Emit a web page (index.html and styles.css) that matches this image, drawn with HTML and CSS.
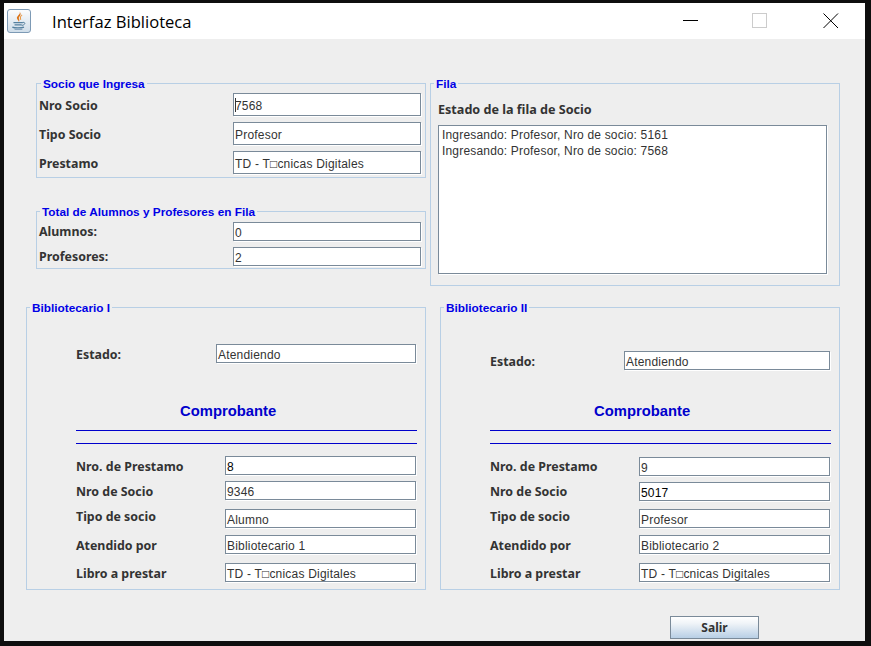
FILE: index.html
```html
<!DOCTYPE html>
<html lang="es">
<head>
    <meta charset="UTF-8">
    <meta name="viewport" content="width=device-width, initial-scale=1.0">
    <title>Interfaz Biblioteca</title>
    <link rel="stylesheet" href="styles.css">
</head>
<body>
    <div class="ventana">
        <div class="titulo">
            <span class="icono-java">
                <svg width="20" height="20" viewBox="0 0 18 18">
                    <path d="M9.500 0.500C11 3 6.500 4.500 7.200 6.800C7.500 7.800 8.500 8.300 9 9.800C9.800 8 8.800 7.300 8.800 6.300C8.800 5 12 3.500 9.500 0.500Z" fill="#dd7418"/>
                    <path d="M11.800 3.500C10 4.800 9.800 6 10.600 7.800" fill="none" stroke="#e79a4a" stroke-width="1"/>
                    <path d="M4 10.500H12.500M5 12.500H11.500" stroke="#55809f" stroke-width="1.200" fill="none"/>
                    <path d="M12.500 10.200C15 9.800 15 12.500 11.500 13" stroke="#55809f" stroke-width="0.900" fill="none"/>
                    <path d="M3 14.500C5 15.500 11 15.500 13.500 14.500" stroke="#55809f" stroke-width="1.100" fill="none"/>
                    <path d="M5 16.600H12" stroke="#8aa6bf" stroke-width="1" fill="none"/>
                </svg>
            </span>
            <span class="titulo-texto">Interfaz Biblioteca</span>
            <span class="controles">
                <svg width="16" height="16" viewBox="0 0 16 16"><path d="M0 7.500H15" stroke="#000" fill="none"/></svg>
                <svg width="16" height="16" viewBox="0 0 16 16"><rect x="0.500" y="0.500" width="14" height="14" fill="none" stroke="#ccc"/></svg>
                <svg class="cerrar" width="16" height="16" viewBox="0 0 16 16"><path d="M0.500 0.500L15 15M15 0.500L0.500 15" stroke="#000" fill="none"/></svg>
            </span>
        </div>

        <div class="contenido">
            <div class="superior">
                <div class="col-izq">
                    <fieldset class="panel panel-socio">
                        <legend>Socio que Ingresa</legend>
                        <div class="fila-dato"><label>Nro Socio</label><span class="campo"><i class="cursor"></i>7568</span></div>
                        <div class="fila-dato"><label>Tipo Socio</label><span class="campo">Profesor</span></div>
                        <div class="fila-dato"><label>Prestamo</label><span class="campo">TD - T□cnicas Digitales</span></div>
                    </fieldset>
                    <fieldset class="panel panel-total">
                        <legend>Total de Alumnos y Profesores en Fila</legend>
                        <div class="fila-dato"><label>Alumnos:</label><span class="campo">0</span></div>
                        <div class="fila-dato"><label>Profesores:</label><span class="campo">2</span></div>
                    </fieldset>
                </div>
                <fieldset class="panel panel-fila">
                    <legend>Fila</legend>
                    <label class="fila-titulo">Estado de la fila de Socio</label>
                    <div class="area">
                        <div>Ingresando: Profesor, Nro de socio: 5161</div>
                        <div>Ingresando: Profesor, Nro de socio: 7568</div>
                    </div>
                </fieldset>
            </div>

            <div class="inferior">
                <fieldset class="panel biblio biblio-1">
                    <legend>Bibliotecario I</legend>
                    <div class="estado"><label>Estado:</label><span class="campo">Atendiendo</span></div>
                    <h3>Comprobante</h3>
                    <div class="linea"></div>
                    <div class="linea linea-2"></div>
                    <div class="renglon"><label>Nro. de Prestamo</label><span class="campo oscuro">8</span></div>
                    <div class="renglon"><label>Nro de Socio</label><span class="campo">9346</span></div>
                    <div class="renglon r-tipo"><label>Tipo de socio</label><span class="campo">Alumno</span></div>
                    <div class="renglon r-atendido"><label>Atendido por</label><span class="campo">Bibliotecario 1</span></div>
                    <div class="renglon r-libro"><label>Libro a prestar</label><span class="campo">TD - T□cnicas Digitales</span></div>
                </fieldset>
                <fieldset class="panel biblio biblio-2">
                    <legend>Bibliotecario II</legend>
                    <div class="estado"><label>Estado:</label><span class="campo">Atendiendo</span></div>
                    <h3>Comprobante</h3>
                    <div class="linea"></div>
                    <div class="linea linea-2"></div>
                    <div class="renglon r-alto"><label>Nro. de Prestamo</label><span class="campo">9</span></div>
                    <div class="renglon r-alto"><label>Nro de Socio</label><span class="campo oscuro">5017</span></div>
                    <div class="renglon r-tipo"><label>Tipo de socio</label><span class="campo">Profesor</span></div>
                    <div class="renglon r-atendido"><label>Atendido por</label><span class="campo">Bibliotecario 2</span></div>
                    <div class="renglon r-libro"><label>Libro a prestar</label><span class="campo">TD - T□cnicas Digitales</span></div>
                </fieldset>
            </div>

            <div class="pie">
                <button class="btn-salir">Salir</button>
            </div>
        </div>
    </div>
</body>
</html>
```

FILE: styles.css
```css
* {
    box-sizing: border-box;
}
html, body {
    height: 100%;
}
body {
    margin: 0;
    padding: 3px 6px 5px 4px;
    background-color: #0e0e0e;
    font-family: 'Liberation Sans', sans-serif;
    overflow: hidden;
}
.ventana {
    height: 638px;
    background: #eeeeee;
    display: flex;
    flex-direction: column;
}
.titulo {
    height: 36px;
    background: #ffffff;
    display: flex;
    align-items: center;
    padding-left: 3px;
}
.icono-java {
    width: 24px;
    height: 24px;
    border: 1px solid #7d9ab5;
    border-radius: 3px;
    background: linear-gradient(#fbfcfd, #cfdde9);
    display: flex;
    align-items: center;
    justify-content: center;
}
.titulo-texto {
    margin-left: 21px;
    font-family: 'Open Sans', sans-serif;
    font-size: 16.6px;
    color: #000;
}
.controles {
    margin-left: auto;
    margin-right: 26px;
    display: flex;
    gap: 53px;
}
.cerrar {
    margin-left: 2px;
}
.contenido {
    flex: 1;
    padding-top: 37px;
}
.superior {
    display: flex;
    padding-left: 32px;
}
.col-izq {
    width: 390px;
}
.panel {
    margin: 0;
    padding: 0;
    min-width: 0;
    border: 1px solid #b8cfe5;
}
.panel legend {
    height: 14px;
    padding: 0 2px;
    font-size: 11.8px;
    line-height: 16px;
    font-weight: bold;
    color: #0000e6;
}
.panel-socio {
    height: 102px;
    padding: 3px 4px 0 2px;
}
.panel-socio legend {
    margin-left: 2px;
}
.panel-total {
    height: 65px;
    margin-top: 26px;
    padding: 4px 4px 0 2px;
}
.panel-total legend {
    margin-left: 1px;
}
label {
    font-family: 'Noto Sans', sans-serif;
    font-size: 12.4px;
    line-height: 14px;
    font-weight: bold;
    color: #333333;
}
.campo {
    display: block;
    height: 19px;
    padding-left: 1px;
    font-size: 12px;
    line-height: 21px;
    letter-spacing: 0.2px;
    color: #333333;
    background: #ffffff;
    border: 1px solid #7a8a99;
    box-shadow: 1px 1px 0 #ffffff;
    white-space: nowrap;
    overflow: hidden;
}
.oscuro {
    color: #000000;
}
.fila-dato {
    display: grid;
    grid-template-columns: 194px 188px;
    align-items: center;
    margin-bottom: 6px;
}
.panel-socio .campo {
    height: 23px;
    line-height: 25px;
}
.panel-socio label {
    padding-top: 2px;
}
.cursor {
    display: inline-block;
    width: 1px;
    height: 14px;
    margin-right: -1px;
    vertical-align: -2px;
    background: #333333;
}
.panel-fila {
    width: 410px;
    height: 210px;
    margin-left: 4px;
    padding: 0 12px 0 7px;
}
.panel-fila legend {
    margin-left: -4px;
}
.fila-titulo {
    display: block;
    margin-top: 12px;
    font-size: 12.6px;
    line-height: 16px;
}
.area {
    height: 149px;
    margin-top: 7px;
    padding: 1px 3px;
    font-size: 12px;
    line-height: 16px;
    letter-spacing: 0.18px;
    color: #333333;
    background: #ffffff;
    border: 1px solid #7a8a99;
    box-shadow: 1px 1px 0 #ffffff;
}
.inferior {
    display: flex;
    margin-top: 14px;
    padding-left: 22px;
}
.biblio {
    height: 290px;
    width: 400px;
    padding: 0 0 0 49px;
}
.biblio legend {
    margin-left: -46px;
}
.biblio-2 {
    margin-left: 14px;
}
.estado, .renglon {
    display: grid;
    align-items: center;
    width: 340px;
}
.biblio-1 .estado {
    grid-template-columns: 140px 200px;
    margin: 30px 0 38px;
}
.biblio-2 .estado {
    grid-template-columns: 134px 206px;
    margin: 37px 0 31px;
}
.estado label {
    padding-top: 2px;
}
h3 {
    width: 205px;
    margin: 0 0 9px;
    padding-left: 104px;
    font-size: 14.8px;
    line-height: 20px;
    font-weight: bold;
    color: #0000cc;
    white-space: nowrap;
}
.linea {
    width: 341px;
    height: 1px;
    background: #0000cc;
}
.linea-2 {
    margin: 12px 0;
}
.renglon {
    grid-template-columns: 149px 191px;
    margin-bottom: 6px;
}
.renglon label {
    padding-top: 2px;
}
.renglon.r-alto label {
    padding-top: 0;
}
.biblio-2 .linea-2 {
    margin-bottom: 13px;
}
.r-tipo {
    margin-top: 9px;
}
.biblio-2 .r-tipo {
    margin-top: 8px;
}
.renglon.r-tipo label {
    padding-top: 0;
    margin-bottom: 3px;
}
.r-atendido {
    margin-top: 7px;
}
.r-libro {
    margin-top: 9px;
}
.pie {
    display: flex;
    justify-content: flex-end;
    margin-top: 26px;
    padding-right: 106px;
}
.btn-salir {
    width: 89px;
    height: 23px;
    padding: 0;
    font-family: 'Noto Sans', sans-serif;
    font-size: 12px;
    font-weight: bold;
    color: #333333;
    background: linear-gradient(#ffffff, #f0f4f8 30%, #b8cfe5);
    border: 1px solid #7a8a99;
}
```
